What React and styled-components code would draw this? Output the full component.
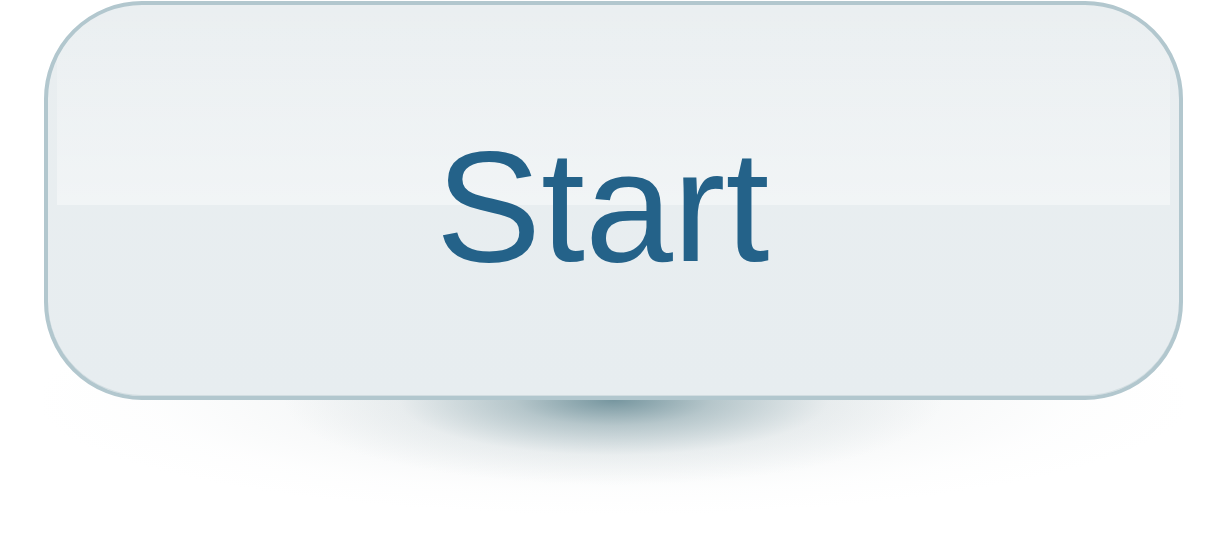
import styled, { createGlobalStyle } from "styled-components";

const GlobalStyle = createGlobalStyle`
  html, body {
    margin: 0;
    padding: 0;
    background: #ffffff;
  }
`;

const Stage = styled.div`
  width: 1205px;
  height: 537px;
  padding: 1px 0 0 44px;
  box-sizing: border-box;
  overflow: hidden;
`;

const ButtonWrap = styled.div`
  position: relative;
  width: 1139px;
  height: 399px;

  /* soft elliptical shadow under the button, centred on its bottom edge */
  &::before {
    content: "";
    position: absolute;
    left: 0;
    right: 0;
    top: 300px;
    height: 236px;
    background:
      radial-gradient(
        330px 85px at 50% 99px,
        rgba(105, 140, 150, 0.9) 0%,
        rgba(125, 155, 163, 0.5) 30%,
        rgba(165, 183, 189, 0.15) 65%,
        rgba(200, 210, 214, 0) 100%
      ),
      radial-gradient(
        580px 115px at 50% 99px,
        rgba(185, 198, 202, 0.28) 0%,
        rgba(200, 210, 213, 0.16) 50%,
        rgba(225, 230, 232, 0.06) 80%,
        rgba(255, 255, 255, 0) 100%
      );
  }
`;

const StartButton = styled.button`
  position: relative;
  display: flex;
  align-items: center;
  justify-content: center;
  width: 100%;
  height: 100%;
  box-sizing: border-box;
  padding: 10px 22px 0 0;
  border: 4px solid #b2c7ce;
  border-radius: 98px;
  background: linear-gradient(180deg, #e9eef0 0%, #e7edf0 100%);
  box-shadow: inset 0 -1px 0 #d2dde1;
  font-family: "Liberation Sans", Arial, sans-serif;
  font-size: 158px;
  color: #246289;
  cursor: pointer;
  overflow: hidden;

  /* glossy upper band */
  &::before {
    content: "";
    position: absolute;
    left: 9px;
    right: 9px;
    top: 0;
    height: 200px;
    background: linear-gradient(
      180deg,
      rgba(255, 255, 255, 0.05) 0%,
      rgba(255, 255, 255, 0.2) 35%,
      rgba(255, 255, 255, 0.4) 100%
    );
  }
`;

const Label = styled.span`
  position: relative;
  line-height: 1;
`;

export default function App() {
  return (
    <>
      <GlobalStyle />
      <Stage>
        <ButtonWrap>
          <StartButton>
            <Label>Start</Label>
          </StartButton>
        </ButtonWrap>
      </Stage>
    </>
  );
}
